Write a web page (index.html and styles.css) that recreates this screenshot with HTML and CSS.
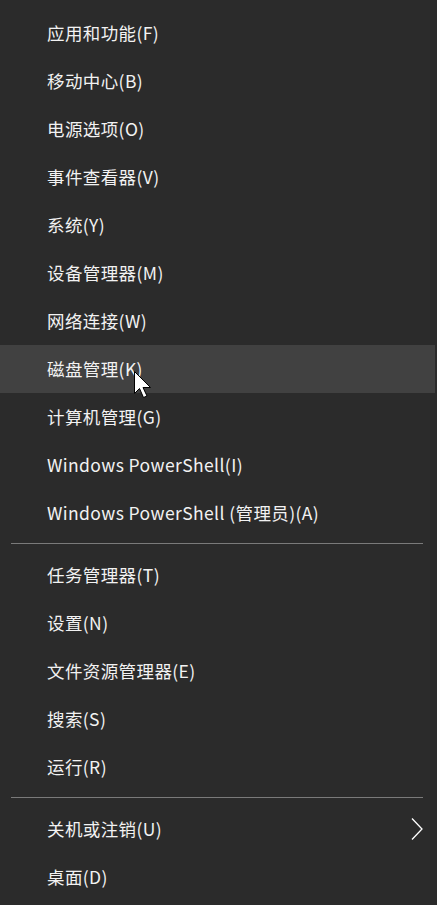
FILE: index.html
```html
<!DOCTYPE html>
<html lang="zh-CN">
<head>
    <meta charset="UTF-8">
    <meta name="viewport" content="width=device-width, initial-scale=1.0">
    <title>Win+X</title>
    <link rel="stylesheet" href="styles.css">
</head>
<body>
    <div class="menu">
        <div class="group">
            <div class="item">应用和功能(F)</div>
            <div class="item">移动中心(B)</div>
            <div class="item">电源选项(O)</div>
            <div class="item">事件查看器(V)</div>
            <div class="item">系统(Y)</div>
            <div class="item">设备管理器(M)</div>
            <div class="item">网络连接(W)</div>
            <div class="item hover">磁盘管理(K)
                <svg class="cursor" width="18" height="28" viewBox="0 0 18 28">
                    <path d="M0.5 0.5 L0.5 22.5 L5.5 17.5 L9.5 26.5 L13 25 L9 16.5 L16.5 16.5 Z" fill="#fff" stroke="#000" stroke-width="1"/>
                </svg>
            </div>
            <div class="item">计算机管理(G)</div>
            <div class="item">Windows PowerShell(I)</div>
            <div class="item">Windows PowerShell (管理员)(A)</div>
        </div>
        <div class="separator"></div>
        <div class="group">
            <div class="item">任务管理器(T)</div>
            <div class="item">设置(N)</div>
            <div class="item">文件资源管理器(E)</div>
            <div class="item">搜索(S)</div>
            <div class="item">运行(R)</div>
        </div>
        <div class="separator"></div>
        <div class="group">
            <div class="item">关机或注销(U)
                <svg class="chevron" width="12" height="22" viewBox="0 0 12 22">
                    <path d="M1 0.5 L11 11 L1 21.5" fill="none" stroke="#fff" stroke-width="1.3"/>
                </svg>
            </div>
            <div class="item">桌面(D)</div>
        </div>
    </div>
</body>
</html>
```

FILE: styles.css
```css
body {
    margin: 0;
    background: #2b2b2b;
    font-family: "Noto Sans CJK SC", "Noto Sans", sans-serif;
    color: #f2f2f2;
}

.menu {
    width: 435px;
    padding-top: 9px;
}

.item {
    position: relative;
    height: 48px;
    box-sizing: border-box;
    padding: 0 0 2px 47px;
    display: flex;
    align-items: center;
    font-size: 17.5px;
    letter-spacing: 0.4px;
}

.item.hover {
    background: #414141;
}

.separator {
    height: 1px;
    background: #7a7a7a;
    margin: 6px 12px 7px 11px;
}

.cursor {
    position: absolute;
    left: 134px;
    top: 26px;
}

.chevron {
    position: absolute;
    left: 411px;
    top: 13px;
}
```
